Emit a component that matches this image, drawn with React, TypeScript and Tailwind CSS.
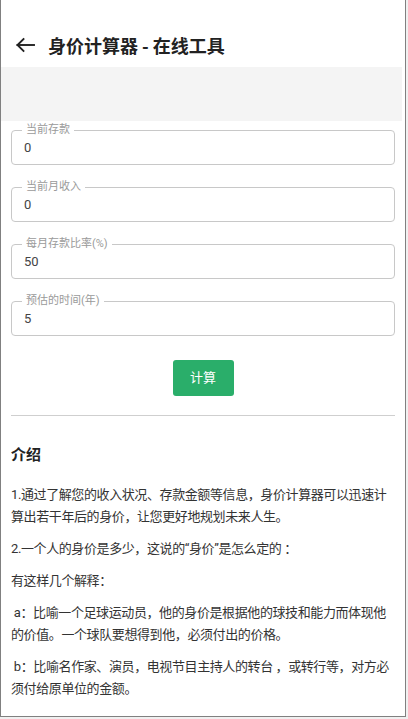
const fields = [
  { label: '当前存款', value: '0' },
  { label: '当前月收入', value: '0' },
  { label: '每月存款比率(%)', value: '50' },
  { label: '预估的时间(年)', value: '5' },
];

const intro = [
  '1.通过了解您的收入状况、存款金额等信息，身价计算器可以迅速计算出若干年后的身价，让您更好地规划未来人生。',
  '2.一个人的身价是多少，这说的“身价”是怎么定的 ：',
  '有这样几个解释：',
  ' a：比喻一个足球运动员，他的身价是根据他的球技和能力而体现他的价值。一个球队要想得到他，必须付出的价格。',
  ' b：比喻名作家、演员，电视节目主持人的转台 ，或转行等，对方必须付给原单位的金额。',
];

export default function App() {
  return (
    <div className="w-[408px] h-[719px] bg-[#f0f0f0] overflow-hidden" style={{ fontFamily: 'Roboto, "Noto Sans CJK SC", sans-serif' }}>
      <div className="w-[406px] h-[717px] bg-white border-l border-r border-b border-[#808080] flex flex-col overflow-hidden">
        {/* Header */}
        <div className="h-[67px] shrink-0 flex items-center pt-[22px] pl-[14px]">
          <svg width="20" height="16" viewBox="0 0 20 16" fill="none" stroke="#222" strokeWidth="1.9" strokeLinecap="square">
            <path d="M19 8H2.5" />
            <path d="M8.5 2L2.5 8l6 6" />
          </svg>
          <h1 className="ml-[13px] text-[18px] leading-[24px] font-bold text-[#222]" style={{ fontFamily: '"Noto Sans CJK SC", sans-serif' }}>身价计算器 - 在线工具</h1>
        </div>

        {/* Banner placeholder */}
        <div className="h-[54px] shrink-0 bg-[#f4f4f4] mr-[3px]" />

        {/* Form */}
        <div className="px-[10px] pt-[3px] flex flex-col gap-[16px]">
          {fields.map((f) => (
            <fieldset key={f.label} className="border border-[#c8c8c8] rounded-[4px] px-[10px] pb-[8px]">
              <legend className="px-[4px] text-[11px] leading-[12px] text-[#9a9a9a]">{f.label}</legend>
              <div className="mt-[4px] pl-[2px] text-[13px] leading-[16px] text-[#444]">{f.value}</div>
            </fieldset>
          ))}
        </div>

        <div className="flex justify-center mt-[24px]">
          <button className="w-[61px] h-[36px] rounded-[3px] bg-[#2aae6a] text-white text-[13px]">计算</button>
        </div>

        <div className="mx-[10px] mt-[19px] border-t border-[#cfcfcf]" />

        {/* Intro */}
        <div className="px-[10px]">
          <h2 className="mt-[28px] text-[15px] leading-[20px] font-bold text-[#222]" style={{ fontFamily: '"Noto Sans CJK SC", sans-serif' }}>介绍</h2>
          <div className="mt-[20px] text-[13px] leading-[22px] tracking-[-0.4px] text-[#333]">
            {intro.map((t, i) => (
              <p key={i} className="mb-[10px] whitespace-pre-wrap">{t}</p>
            ))}
          </div>
        </div>
      </div>
    </div>
  );
}
